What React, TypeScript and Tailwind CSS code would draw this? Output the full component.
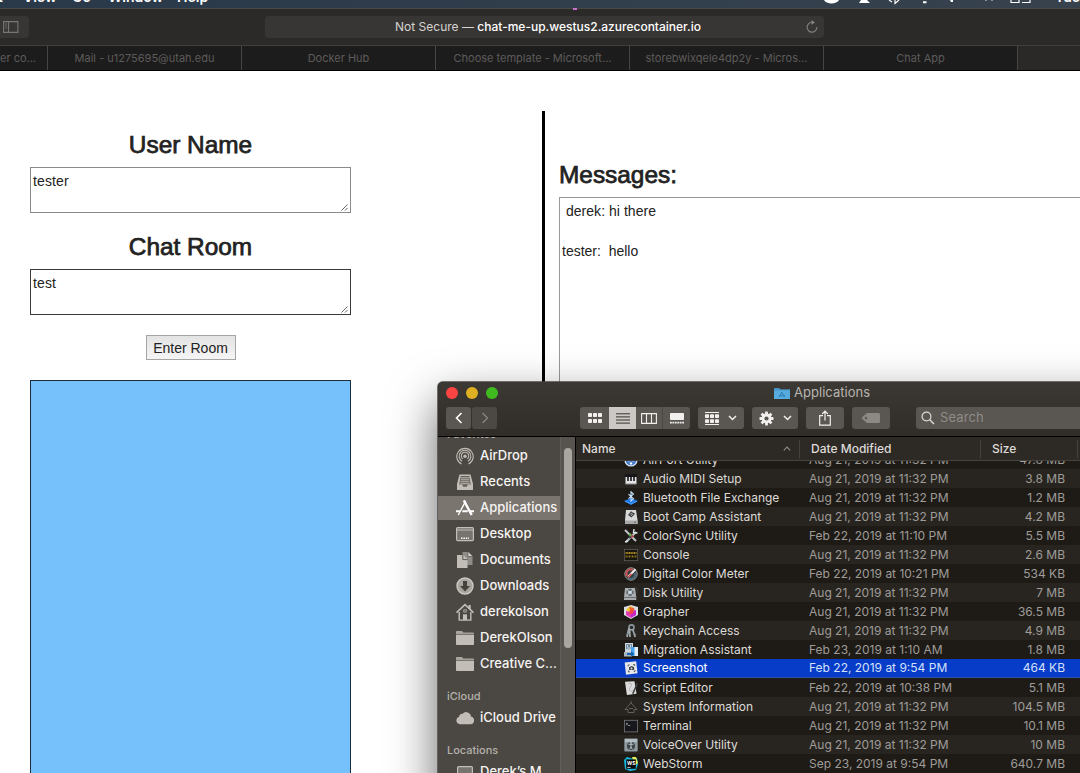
import React from "react";

const TABS = ["Mail - u1275695@utah.edu", "Docker Hub", "Choose template - Microsoft...", "storebwixqele4dp2y - Micros...", "Chat App"];

type AppRow = { name: string; date: string; size: string; selected?: boolean };

const ROWS: AppRow[] = [
  { name: "AirPort Utility", date: "Aug 21, 2019 at 11:32 PM", size: "47.8 MB" },
  { name: "Audio MIDI Setup", date: "Aug 21, 2019 at 11:32 PM", size: "3.8 MB" },
  { name: "Bluetooth File Exchange", date: "Aug 21, 2019 at 11:32 PM", size: "1.2 MB" },
  { name: "Boot Camp Assistant", date: "Aug 21, 2019 at 11:32 PM", size: "4.2 MB" },
  { name: "ColorSync Utility", date: "Feb 22, 2019 at 11:10 PM", size: "5.5 MB" },
  { name: "Console", date: "Aug 21, 2019 at 11:32 PM", size: "2.6 MB" },
  { name: "Digital Color Meter", date: "Feb 22, 2019 at 10:21 PM", size: "534 KB" },
  { name: "Disk Utility", date: "Aug 21, 2019 at 11:32 PM", size: "7 MB" },
  { name: "Grapher", date: "Aug 21, 2019 at 11:32 PM", size: "36.5 MB" },
  { name: "Keychain Access", date: "Aug 21, 2019 at 11:32 PM", size: "4.9 MB" },
  { name: "Migration Assistant", date: "Feb 23, 2019 at 1:10 AM", size: "1.8 MB" },
  { name: "Screenshot", date: "Feb 22, 2019 at 9:54 PM", size: "464 KB", selected: true },
  { name: "Script Editor", date: "Feb 22, 2019 at 10:38 PM", size: "5.1 MB" },
  { name: "System Information", date: "Aug 21, 2019 at 11:32 PM", size: "104.5 MB" },
  { name: "Terminal", date: "Aug 21, 2019 at 11:32 PM", size: "10.1 MB" },
  { name: "VoiceOver Utility", date: "Aug 21, 2019 at 11:32 PM", size: "10 MB" },
  { name: "WebStorm", date: "Sep 23, 2019 at 9:54 PM", size: "640.7 MB" },
];

const APP_ICONS: Record<string, React.ReactNode> = {
  "AirPort Utility": (
    <>
      <circle cx="7" cy="7" r="6.6" fill="#d9e3ee" />
      <circle cx="7" cy="7" r="5.3" fill="#3f78c9" />
      <path d="M3 7a5 5 0 0 1 8 0M4.6 8.6a3 3 0 0 1 4.8 0" stroke="#fff" fill="none" />
      <circle cx="7" cy="10.4" r="1.2" fill="#fff" />
    </>
  ),
  "Audio MIDI Setup": (
    <>
      <rect x="1" y="2" width="12" height="5" fill="#17171a" />
      <rect x="1.5" y="5" width="11" height="7" fill="#e4e4e6" />
      <path d="M4 4v5M7 4v5M10 4v5" stroke="#141417" strokeWidth="1.6" />
      <path d="M1.5 12h11" stroke="#8b8b8d" strokeWidth="1" />
    </>
  ),
  "Bluetooth File Exchange": (
    <>
      <path d="M0 10l7-3 7 3-7 4z" fill="#1f78e8" />
      <path d="M1 10.2l6 2.8 6-2.8" stroke="#6cb2ff" strokeWidth=".6" fill="none" />
      <path d="M4.5 3.2l5 4.6L7 10V.8l2.5 2.3-5 4.6" stroke="#c5e0fb" strokeWidth="1.1" fill="none" />
    </>
  ),
  "Boot Camp Assistant": (
    <>
      <path d="M2 0h10l1.5 10v4H1v-4z" fill="#d8d8d8" />
      <path d="M1 10.5h12.5V14H1z" fill="#a9a9ab" />
      <path d="M7 1.2l4 2.6-3.6 3.7L4 5z" fill="#3a3a3d" />
      <path d="M6 4.6l2-2M6.8 5.8l2.2-2" stroke="#e8e8e8" strokeWidth=".8" />
      <circle cx="11" cy="12.2" r=".7" fill="#555" />
    </>
  ),
  "ColorSync Utility": (
    <>
      <path d="M1 1l11 11M2 13L12 3" stroke="#bfc5c9" strokeWidth="2" />
      <path d="M10 0l-.5 3.5L13.5 4M1 13l3-1" stroke="#dfe6ea" strokeWidth="1.4" fill="none" />
      <circle cx="6.2" cy="5.8" r="1.5" fill="#5ea94a" />
      <circle cx="8.2" cy="7.3" r="1.4" fill="#c04a4a" />
      <circle cx="6" cy="8.2" r="1.3" fill="#3c4552" />
    </>
  ),
  Console: (
    <>
      <rect x=".3" y="1.3" width="13.4" height="11.4" fill="#15140d" stroke="#686860" strokeWidth=".7" />
      <path d="M1.5 5h11" stroke="#b08d25" strokeWidth="2" strokeDasharray="1.2 .5" />
      <path d="M1.5 8.6h11" stroke="#96761f" strokeWidth="2" strokeDasharray="1.3 .6 .7 .6" />
    </>
  ),
  "Digital Color Meter": (
    <>
      <circle cx="7" cy="7" r="6.2" fill="#39393b" stroke="#9a9a9c" strokeWidth="1" />
      <path d="M3 9a4.4 4.4 0 0 1 6-6" stroke="#d15252" strokeWidth="1.8" fill="none" />
      <path d="M4 10.8a4.5 4.5 0 0 0 7-5" stroke="#4a6f83" strokeWidth="1.6" fill="none" />
      <path d="M4 10L11.5 2.3" stroke="#ececec" strokeWidth="2.1" />
      <path d="M4 10.3l3.5-3.5" stroke="#d04747" strokeWidth="1.6" />
    </>
  ),
  "Disk Utility": (
    <>
      <path d="M1 2h10l1.3 9v3H0v-3z" fill="#a7abad" />
      <path d="M0 11.5h12.3" stroke="#6d7072" />
      <circle cx="6" cy="6.3" r="3.6" fill="#5e6e78" />
      <circle cx="6" cy="6.3" r="1.6" fill="#d4dee4" />
      <path d="M3 3l2 3M9 3L7 6M3 10l2-3M9.5 10L7 7" stroke="#d9d9d9" strokeWidth=".8" />
      <path d="M9 2c3-3 5 1 4 6" stroke="#44413d" strokeWidth=".7" fill="none" />
    </>
  ),
  Grapher: (
    <>
      <path d="M0 2l7-2 7 2v8l-7 4-7-4z" fill="#dadde3" />
      <path d="M2 5l4-4 4 2-3 5z" fill="#f1c724" />
      <path d="M5 2l5 1 1 4-4 1z" fill="#ef5d34" />
      <path d="M2 6l5 1v6l-5-3z" fill="#e43bb3" />
      <path d="M7 7l5-2v5l-5 3z" fill="#c425c9" />
      <circle cx="7.4" cy="7" r="2.1" fill="#f44343" />
    </>
  ),
  "Keychain Access": (
    <>
      <circle cx="7.5" cy="3.4" r="2.5" fill="none" stroke="#8b979d" strokeWidth="1.6" />
      <path d="M5 4L3 13M5.5 4.5L6 13M8.6 5l2.6 8" stroke="#9ba5a9" strokeWidth="1.8" />
      <path d="M3.3 9l-1 3M10 8l2 3" stroke="#68767e" strokeWidth="1" />
    </>
  ),
  "Migration Assistant": (
    <>
      <rect x="1" y="0" width="8" height="9" fill="#cdd8e0" />
      <rect x="2" y="1.2" width="6" height="5" fill="#6b8497" />
      <path d="M3.5 2v2M6.5 2v2M3 5h4" stroke="#e2edf5" strokeWidth=".8" />
      <rect x="0" y="9" width="8" height="4.5" fill="#aab6be" />
      <rect x="7" y="4" width="7" height="9" fill="#4aa4ef" />
      <path d="M10.5 4H14v9h-3.5z" fill="#e3eef6" />
      <path d="M3 10h4V8l3.5 3L7 13.7V12H3z" fill="#1763ad" />
    </>
  ),
  Screenshot: (
    <>
      <path d="M.7 1.5L12.2.2l1.3 12L2 13.8z" fill="#e6e7ea" />
      <path d="M4 5.3V4h1.5M9 3.6h1.6V5M4.4 9.5v1.3h1.5M9.7 10.4H11V9" stroke="#4a4c52" strokeWidth=".9" fill="none" />
      <path d="M5 6h1l.6-.8h2L9.2 6h.9v3H5z" fill="#3e4148" />
      <circle cx="7.5" cy="7.4" r="1" fill="#e6e7ea" />
    </>
  ),
  "Script Editor": (
    <>
      <path d="M1 .8l9.5-.6 2 12.5-9.6 1.2z" fill="#dcdcdc" />
      <path d="M4.3 3.5c1-1.8 3.8-1.4 3.2.6S4.7 7 5.5 9s3 1.3 3.2.3" stroke="#a4a4a4" strokeWidth=".8" fill="none" />
      <path d="M12.6 2L8.5 11.5l-.3 2 1.6-1.3L14 2.8z" fill="#3f4144" />
    </>
  ),
  "System Information": (
    <>
      <path d="M1 9.5L7 3l6 6.5h-3v3H4v-3z" fill="#24221f" stroke="#6a6762" strokeWidth=".9" />
      <path d="M7 1v2M5 8.5h4" stroke="#77736e" strokeWidth=".8" />
    </>
  ),
  Terminal: (
    <>
      <rect x=".4" y="1.3" width="13.2" height="11.6" fill="#17181b" stroke="#777779" strokeWidth=".8" />
      <path d="M2 4l1.7 1L2 6M4.2 6.5h2" stroke="#c9c9c9" strokeWidth=".7" fill="none" />
    </>
  ),
  "VoiceOver Utility": (
    <>
      <rect x=".3" y=".5" width="13.4" height="13" rx="1" fill="#8d9aa0" />
      <rect x="1" y="1" width="12" height="3" fill="#b2bdc2" />
      <circle cx="7" cy="8" r="4" fill="#3b454a" />
      <path d="M4.5 6.3h5M7 6v3M7 8.8l-1.3 2.6M7 8.8l1.3 2.6" stroke="#cfd7da" strokeWidth=".8" />
      <circle cx="7" cy="4.8" r=".9" fill="#cfd7da" />
    </>
  ),
  WebStorm: (
    <>
      <path d="M0 3l3-3 5 1.5L13 1l1 6-2 6-6 1-5-2z" fill="#16b9dc" />
      <path d="M8 0h4l2 6-3 2z" fill="#e8ef54" />
      <rect x="2.2" y="2.4" width="9.6" height="9.4" fill="#08090b" />
      <text x="3" y="7.6" fontSize="5" fontWeight="700" fontFamily="Inter, sans-serif" fill="#fff">WS</text>
      <path d="M3.3 10.4h3.2" stroke="#fff" strokeWidth=".8" />
    </>
  ),
};

const SIDE_ICONS: Record<string, React.ReactNode> = {
  AirDrop: (
    <>
      <g fill="none" stroke="#c2bdb7" strokeWidth="1.1">
        <path d="M5.5 17A8.2 8.2 0 1 1 12.5 17" />
        <path d="M6 14.2A5.9 5.9 0 1 1 12 14.2" />
        <path d="M6.8 11.9A3.7 3.7 0 1 1 11.2 11.9" />
      </g>
      <circle cx="9" cy="9.2" r="1.7" fill="#c2bdb7" />
    </>
  ),
  Recents: (
    <>
      <path d="M3.5 1.5h11l2.5 9.5v6H1v-6z" fill="#c2bdb7" />
      <path d="M4.8 3h8.4l1.6 8.5h-3l-1 2.2H7.2l-1-2.2h-3z" fill="#615d57" />
      <path d="M5 4.8h8M4.8 6.8h8.4M4.5 8.8h9M4.2 10.8h9.6" stroke="#c2bdb7" strokeWidth="1" />
    </>
  ),
  Applications: (
    <g stroke="#fff" fill="none">
      <path d="M9.7 2L2.3 16" strokeWidth="1.4" />
      <path d="M7.8 1.4L15.7 16" strokeWidth="2.4" />
      <path d="M0 12.3h4M6.3 12.3h5.5M14 12.3h4" strokeWidth="2" />
    </g>
  ),
  Desktop: (
    <>
      <rect x=".6" y="2.6" width="16.8" height="13" rx="1" fill="#77736e" stroke="#c2bdb7" strokeWidth="1.2" />
      <path d="M1 5h16" stroke="#c2bdb7" strokeWidth="1" />
      <path d="M5 13.2h8" stroke="#fff" strokeWidth="1.6" strokeDasharray="1.5 .9" />
    </>
  ),
  Documents: (
    <>
      <path d="M6.5 1h6l4 4v9H6.5z" fill="#8f8b86" />
      <path d="M12 1v4.5h4.5" fill="#d9d5d0" stroke="#55514c" strokeWidth=".7" />
      <path d="M1 4h6l4.5 4.5V17H1z" fill="#c2bdb7" />
      <path d="M6.8 3.6v5h5" fill="#c2bdb7" stroke="#55514c" strokeWidth=".9" />
    </>
  ),
  Downloads: (
    <>
      <circle cx="9" cy="9" r="8" fill="#a8a49e" stroke="#cdc9c4" strokeWidth="1.4" />
      <path d="M7 4h4v5h3l-5 5.5L4 9h3z" fill="#45413c" />
    </>
  ),
  derekolson: (
    <>
      <path d="M12.5 2h2.2v4h-2.2z" fill="#c2bdb7" />
      <path d="M3.2 9v8.1h11.6V9" fill="none" stroke="#c2bdb7" strokeWidth="1.4" />
      <path d="M.5 9.6L9 1.6l8.5 8" fill="none" stroke="#c2bdb7" strokeWidth="1.5" />
      <path d="M7 11.3h4V17H7z" fill="#c2bdb7" />
      <rect x="7.8" y="6.8" width="2.4" height="2.2" fill="none" stroke="#c2bdb7" strokeWidth=".8" />
    </>
  ),
  folder: (
    <>
      <path d="M0 3.2c0-.7.4-1.1 1-1.1h5l1.4 1.4H17c.6 0 1 .3 1 .9V6H0z" fill="#aaa6a0" />
      <path d="M0 6h18v9.2c0 .5-.3.8-.8.8H.8c-.5 0-.8-.3-.8-.8z" fill="#c2bdb7" />
      <path d="M0 5.4h18" stroke="#67635d" strokeWidth=".8" />
    </>
  ),
  cloud: <path d="M4 15.3a3.9 3.9 0 0 1-.9-7.6 3 3 0 0 1 3.5-2.9A4.8 4.8 0 0 1 15 7.6a3.9 3.9 0 0 1-.5 7.7z" fill="#c2bdb7" />,
  laptop: (
    <>
      <rect x="1.6" y="3.6" width="14.8" height="11" rx="1" fill="#77736e" stroke="#c2bdb7" strokeWidth="1.2" />
      <path d="M0 16h18" stroke="#c2bdb7" />
    </>
  ),
};

function SideRow({ label, icon, active }: { label: string; icon: string; active?: boolean }) {
  return (
    <div className="flex h-[26px] shrink-0 items-center">
      <div className={"flex h-6 w-[122px] items-center gap-[6px] pl-[18px] " + (active ? "bg-[#7a756f]" : "")}>
        <svg width="18" height="18" viewBox="0 0 18 18" className="shrink-0">{SIDE_ICONS[icon]}</svg>
        <span className="whitespace-nowrap text-[13px] font-medium text-[#f6f4f2]">{label}</span>
      </div>
    </div>
  );
}

function Field({ value, dark }: { value: string; dark?: boolean }) {
  return (
    <div className={"flex h-[46px] w-[321px] justify-between border bg-white pl-[2px] " + (dark ? "border-[#3a3a3a]" : "border-[#8a8a8a]")}>
      <span className="mt-[5px] text-[14px] leading-4 tracking-[0.12px]">{value}</span>
      <svg width="10" height="10" viewBox="0 0 10 10" className="self-end">
        <path d="M1.5 8.5l6-6M5 8.5l2.6-2.6" stroke="#555" strokeWidth=".9" />
      </svg>
    </div>
  );
}

function Heading({ children }: { children: React.ReactNode }) {
  return <h2 className="text-[24.4px] leading-[30px] text-[#222] [-webkit-text-stroke:0.75px_#222]">{children}</h2>;
}

const TOOL = "flex h-[22px] items-center justify-center rounded-[3px] bg-[#5a5651]";

function Chevron() {
  return (
    <svg width="9" height="6" viewBox="0 0 9 6">
      <path d="M1 1l3.5 3.5L8 1" fill="none" stroke="#f0eeec" strokeWidth="1.5" />
    </svg>
  );
}

function FinderWindow() {
  return (
    <div className="absolute left-[438px] top-[382px] flex h-[440px] w-[720px] flex-col overflow-hidden rounded-[5px] bg-[#1f1c18] font-['Inter',sans-serif] shadow-[0_0_0_1px_rgba(70,70,68,0.75),0_20px_48px_rgba(0,0,0,0.62)]">
      <div className="h-[55px] shrink-0 border-b border-black bg-linear-to-b from-[#3c3934] to-[#302d28]">
        <div className="flex h-[22px] items-center">
          <div className="flex w-[336px] gap-2 pl-2">
            <i className="size-3 rounded-full bg-[#fc4442]" />
            <i className="size-3 rounded-full bg-[#dfb022]" />
            <i className="size-3 rounded-full bg-[#3fbb20]" />
          </div>
          <svg width="16" height="13" viewBox="0 0 16 13">
            <path d="M0 1h5l1.3 1.3H16V12H0z" fill="#4694c4" />
            <path d="M0 3.4h16V12H0z" fill="#57acdf" />
            <path d="M8 5l-2.8 5M7.6 5l3 5M5 8.8h6" stroke="#2878ad" strokeWidth=".9" />
          </svg>
          <span className="ml-1 text-[13px] tracking-[0.03px] text-[#b8b5b1]">Applications</span>
        </div>
        <div className="flex h-7 items-center">
          <div className="ml-2 flex gap-px">
            <div className={TOOL + " w-[25px]"}>
              <svg width="8" height="12" viewBox="0 0 8 12"><path d="M6.5 1L1.5 6l5 5" fill="none" stroke="#fff" strokeWidth="1.6" /></svg>
            </div>
            <div className={TOOL + " w-[25px] !bg-[#4c4843]"}>
              <svg width="8" height="12" viewBox="0 0 8 12"><path d="M1.5 1l5 5-5 5" fill="none" stroke="#8a8680" strokeWidth="1.3" /></svg>
            </div>
          </div>
          <div className={TOOL + " ml-[83px] w-[110px] overflow-hidden"}>
            <div className="flex w-[29px] justify-center">
              <svg width="14" height="10" viewBox="0 0 14 10" fill="#f2f0ee">
                {[0, 5, 10].map((x) => <React.Fragment key={x}><rect x={x} y="0" width="4" height="4" rx=".8" /><rect x={x} y="6" width="4" height="4" rx=".8" /></React.Fragment>)}
              </svg>
            </div>
            <div className="flex h-full w-[27px] items-center justify-center bg-[#cbc8c5]">
              <svg width="14" height="11" viewBox="0 0 14 11"><path d="M0 .8h14M0 3.9h14M0 7h14M0 10.1h14" stroke="#38342f" /></svg>
            </div>
            <div className="flex h-full w-[27px] items-center justify-center border-r border-[#4b4742]">
              <svg width="16" height="11" viewBox="0 0 16 11"><path d="M.6.6h14.8v9.8H.6zM5.5.6v9.8M10.5.6v9.8" stroke="#f2f0ee" strokeWidth="1.1" fill="none" /></svg>
            </div>
            <div className="flex w-[27px] justify-center">
              <svg width="14" height="11" viewBox="0 0 14 11"><rect width="14" height="7" rx=".8" fill="#f2f0ee" /><path d="M0 9.7h14" stroke="#f2f0ee" strokeWidth="1.8" strokeDasharray="1.8 .64" /></svg>
            </div>
          </div>
          <div className={TOOL + " ml-2 w-[46px] gap-[9px]"}>
            <svg width="14" height="13" viewBox="0 0 14 13" fill="#f2f0ee">
              <path d="M0 0h14v1H0zM0 11.9h14v1H0z" />
              {[0, 5, 10].map((x) => <React.Fragment key={x}><rect x={x} y="2.2" width="4" height="3.8" rx=".8" /><rect x={x} y="7.2" width="4" height="3.8" rx=".8" /></React.Fragment>)}
            </svg>
            <Chevron />
          </div>
          <div className={TOOL + " ml-2 w-[46px] gap-[9px]"}>
            <svg width="15" height="15" viewBox="-7.5 -7.5 15 15">
              {[0, 45, 90, 135].map((a) => <rect key={a} x="-1.4" y="-7" width="2.8" height="14" rx=".5" fill="#f2f0ee" transform={`rotate(${a})`} />)}
              <circle r="4.9" fill="#f2f0ee" />
              <circle r="2.1" fill="#5a5651" />
            </svg>
            <Chevron />
          </div>
          <div className={TOOL + " ml-2 w-[38px]"}>
            <svg width="12" height="16" viewBox="0 0 12 16" className="-mt-px"><path d="M4 5.6H.7v9.6h10.6V5.6H8M6 10.5V1.2M3.2 4L6 1.2 8.8 4" fill="none" stroke="#f2f0ee" strokeWidth="1.2" /></svg>
          </div>
          <div className={TOOL + " ml-2 w-[38px]"}>
            <svg width="18" height="10" viewBox="0 0 18 10"><path d="M5 0h11.5C17.4 0 18 .6 18 1.500v7c0 .9-.6 1.500-1.500 1.500H5L.6 6.200a1.600 1.600 0 0 1 0-2.400z" fill="#8c8883" /><circle cx="4" cy="5" r="1.200" fill="#5a5651" /></svg>
          </div>
          <div className={TOOL + " ml-[26px] w-[220px] !justify-start gap-[5px] pl-[5px]"}>
            <svg width="14" height="14" viewBox="0 0 14 14"><circle cx="5.500" cy="5.500" r="4.400" fill="none" stroke="#dedbd8" strokeWidth="1.200" /><path d="M8.800 8.800l4.200 4.200" stroke="#dedbd8" strokeWidth="1.400" /></svg>
            <span className="text-[13px] tracking-[0.1px] text-[#8f8b86]">Search</span>
          </div>
        </div>
      </div>
      <div className="flex min-h-0 flex-1">
        <div className="flex w-[138px] shrink-0 border-r border-black bg-[#4b4742]">
          <div className="flex w-[122px] flex-col overflow-hidden">
            <div className="-mt-[10px] h-4 shrink-0 pl-[9px] text-[11px] font-semibold leading-[14px] text-[#b5b1ac]">Favorites</div>
            <SideRow label="AirDrop" icon="AirDrop" />
            <SideRow label="Recents" icon="Recents" />
            <SideRow label="Applications" icon="Applications" active />
            <SideRow label="Desktop" icon="Desktop" />
            <SideRow label="Documents" icon="Documents" />
            <SideRow label="Downloads" icon="Downloads" />
            <SideRow label="derekolson" icon="derekolson" />
            <SideRow label="DerekOlson" icon="folder" />
            <SideRow label="Creative C..." icon="folder" />
            <div className="mt-[10px] h-[18px] shrink-0 pl-[9px] text-[11px] font-medium leading-[18px] text-[#b5b1ac]">iCloud</div>
            <SideRow label="iCloud Drive" icon="cloud" />
            <div className="mt-[10px] h-[18px] shrink-0 pl-[9px] text-[11px] font-medium leading-[18px] text-[#b5b1ac]">Locations</div>
            <SideRow label="Derek’s M..." icon="laptop" />
          </div>
          <div className="flex w-[15px] justify-center border-l border-[#625e59] bg-[#57534e] pt-[11px]">
            <div className="h-[200px] w-2 rounded-full bg-[#a9a6a1]" />
          </div>
        </div>
        <div className="flex flex-1 flex-col">
          <div className="z-10 flex h-6 shrink-0 items-center border-b border-[#45413c] bg-[#2d2924] text-[12px] font-medium text-[#dedbd8]">
            <div className="flex h-[18px] w-[224px] items-center justify-between border-r border-[#45413c] pl-[6px] pr-2">
              Name
              <svg width="8" height="5" viewBox="0 0 8 5"><path d="M.8 4.300L4 1l3.200 3.300" fill="none" stroke="#8d8984" strokeWidth="1.100" /></svg>
            </div>
            <div className="flex h-[18px] w-[181px] items-center border-r border-[#45413c] pl-[11px]">Date Modified</div>
            <div className="flex h-[18px] w-[97px] items-center border-r border-[#45413c] pl-[11px]">Size</div>
          </div>
          <div className="-mt-[11px]">
            {ROWS.map((r, i) => (
              <div
                key={r.name}
                className={
                  "flex h-[19px] items-center text-[12px] " +
                  (r.selected ? "border-b border-[#2d52a8] bg-[#063cc8] text-[#d5e0fa]" : i % 2 ? "bg-[#282521] text-[#9f9c98]" : "bg-[#1e1b17] text-[#9f9c98]")
                }
              >
                <svg width="14" height="14" viewBox="0 0 14 14" className="ml-12 shrink-0">{APP_ICONS[r.name]}</svg>
                <span className={"w-[166px] whitespace-nowrap pl-[5px] " + (r.selected ? "text-white" : "text-[#dedbd7]")}>{r.name}</span>
                <span className="w-[157px] whitespace-nowrap pl-[5px]">{r.date}</span>
                <span className="w-[104px] whitespace-nowrap text-right">{r.size}</span>
              </div>
            ))}
          </div>
        </div>
      </div>
    </div>
  );
}

export default function App() {
  return (
    <div className="relative flex h-[773px] w-[1080px] flex-col overflow-hidden bg-white font-['Liberation_Sans',Arial,sans-serif] text-[#222]">
      <div className="flex h-2 shrink-0 justify-between overflow-hidden bg-linear-to-r from-[#29394a] to-[#37424d] font-['Inter',sans-serif] text-[14px] font-semibold leading-[16px] text-white">
        <div className="-mt-[11px] flex">
          <span className="-ml-[23px] w-[46px]">Edit</span>
          <span className="w-[49px]">View</span>
          <span className="w-[36px]">Go</span>
          <span className="w-[69px]">Window</span>
          <span>Help</span>
        </div>
        <div className="flex">
          <svg width="235" height="8" viewBox="820 0 235 8" fill="#fff">
            <path d="M824 0h15c-2 4.500-13 4.500-15 0zM861 0h6l3 3h-11zM923 1.300h3.500v2H923zM950 0h3v2h-2z" />
            <path d="M889 0l3 2M895 0v3.500l4-3.500" stroke="#fff" strokeWidth="1.200" fill="none" />
            <path d="M985 .5h2M991 .5h2" stroke="#8a939c" />
            <path d="M1011 0v2.500h8V0M1022 2.500h8V0" stroke="#fff" strokeWidth="1.200" fill="none" />
          </svg>
          <span className="-mt-[11px] w-[25px] whitespace-nowrap">Tue</span>
        </div>
      </div>
      <div className="flex h-[38px] shrink-0 items-center border-b border-t border-b-[#413f3d] border-t-[#4b4846] bg-[#2b2a28]">
        <div className="flex h-[22px] w-[29px] items-center rounded-r-[4px] bg-[#383634] pl-[3px]">
          <svg width="16" height="12" viewBox="0 0 16 12"><path d="M.6.6h14.300v10.800H.6zM5.500.6v10.800" fill="none" stroke="#787674" strokeWidth="1.100" /><path d="M2 3h2M2 5h2M2 7h2" stroke="#787674" strokeWidth=".8" /></svg>
        </div>
        <div className="ml-[236px] flex h-[22px] w-[559px] items-center rounded-[4px] bg-[#383634] font-['Inter',sans-serif] text-[12px]">
          <div className="flex-1 pl-[26px] text-center">
            <span className="text-[#d5d3d1]">Not Secure — </span>
            <span className="font-medium text-white">chat-me-up.westus2.azurecontainer.io</span>
          </div>
          <svg width="14" height="14" viewBox="0 0 14 14" className="mr-[5px]"><path d="M7 2.300A4.900 4.900 0 1 0 11.900 7" fill="none" stroke="#858381" strokeWidth="1.100" /><path d="M6.500 0L10 2.400 6.500 4.800z" fill="#858381" /></svg>
        </div>
        <div className="absolute left-[573px] top-2 h-[2px] w-1 bg-[#c96fd0]" />
      </div>
      <div className="flex h-[25px] shrink-0 border-b border-black bg-[#1c1c1c] font-['Inter',sans-serif] text-[11px] text-[#5d5b5a]">
        <div className="flex w-[47px] items-center whitespace-nowrap">er co...</div>
        {TABS.map((t) => (
          <div key={t} className="flex w-[194px] items-center justify-center whitespace-nowrap border-l border-[#474543]">{t}</div>
        ))}
        <div className="flex-1 border-l border-[#474543] bg-[#2a2927]" />
      </div>
      <main className="flex min-h-0 flex-1">
        <section className="flex w-[542px] flex-col pl-[30px]">
          <div className="flex w-[321px] flex-col items-center">
            <div className="mt-[59px]"><Heading>User Name</Heading></div>
            <div className="mt-[7px]"><Field value="tester" /></div>
            <div className="mt-[19px]"><Heading>Chat Room</Heading></div>
            <div className="mt-[7px]"><Field value="test" dark /></div>
            <button className="mt-5 h-[25px] w-[90px] whitespace-nowrap border border-[#a5a5a5] bg-linear-to-b from-[#e3e3e3] to-[#f5f5f5] text-[14px] leading-[22px]">Enter Room</button>
            <div className="mt-5 h-[420px] w-[321px] border border-[#1d2c38] bg-[#76c1fc]" />
          </div>
        </section>
        <section className="mt-10 flex flex-1 flex-col border-l-[3px] border-black pl-[14px]">
          <div className="mt-[49px]"><Heading>Messages:</Heading></div>
          <div className="mt-[7px] flex-1 whitespace-pre border-l border-t border-[#999] pl-[2px] pt-[3px] text-[14px] leading-5">
            <p className="tracking-[0.04px]">{" derek: hi there"}</p>
            <p className="mt-5">{"tester:  hello"}</p>
          </div>
        </section>
      </main>
      <FinderWindow />
    </div>
  );
}
